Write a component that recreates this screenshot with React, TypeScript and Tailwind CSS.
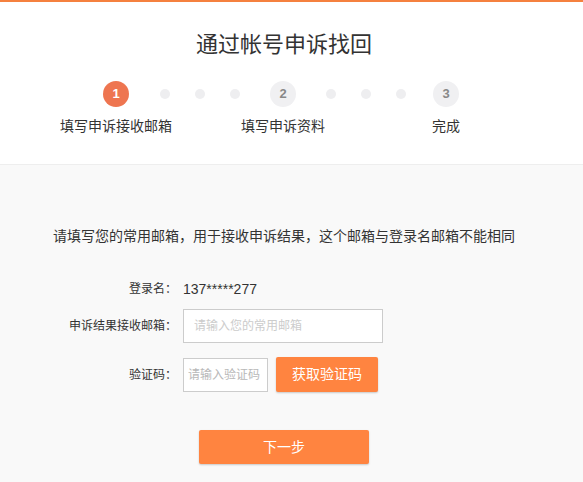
import React from "react";

const font = { fontFamily: '"Liberation Sans", "Noto Sans CJK SC", sans-serif' };

function Step({ n, label, active }: { n: number; label: string; active?: boolean }) {
  return (
    <div className="flex w-[26px] flex-col items-center">
      <div
        className={`flex h-[26px] w-[26px] items-center justify-center rounded-full text-[13px] font-bold ${
          active ? "bg-[#ee7550] text-white" : "bg-[#f0f0f2] text-[#888]"
        }`}
      >
        {n}
      </div>
      <div className="mt-[9px] whitespace-nowrap text-[14px] leading-[20px] text-[#333]">{label}</div>
    </div>
  );
}

function Dots({ className }: { className: string }) {
  return (
    <div className={`flex h-[26px] items-center gap-[25px] ${className}`}>
      <span className="h-[10px] w-[10px] rounded-full bg-[#eeeef0]" />
      <span className="h-[10px] w-[10px] rounded-full bg-[#eeeef0]" />
      <span className="h-[10px] w-[10px] rounded-full bg-[#eeeef0]" />
    </div>
  );
}

export default function App() {
  return (
    <div className="min-h-[482px] w-full bg-[#f9f9f9]" style={font}>
      {/* header */}
      <div className="border-t-2 border-b border-t-[#f5813f] border-b-[#eeeeee] bg-white pt-[28px] pb-[28px]">
        <h1 className="w-[568px] text-center text-[22px] leading-[30px] font-normal text-[#333]">
          通过帐号申诉找回
        </h1>
        <div className="mt-[21px] flex items-start pl-[103px]">
          <Step n={1} label="填写申诉接收邮箱" active />
          <Dots className="ml-[31px] mr-[30px]" />
          <Step n={2} label="填写申诉资料" />
          <Dots className="ml-[30px] mr-[27px]" />
          <Step n={3} label="完成" />
        </div>
      </div>

      {/* form */}
      <div className="pt-[61px] pb-[18px]">
        <p className="pl-[53px] text-[14px] leading-[20px] text-[#333]">
          请填写您的常用邮箱，用于接收申诉结果，这个邮箱与登录名邮箱不能相同
        </p>

        <div className="mt-[33px] grid grid-cols-[177px_auto] items-center gap-x-[6px]">
          <span className="text-right text-[12px] leading-[20px] text-[#333]">登录名：</span>
          <span className="text-[14px] leading-[20px] text-[#333]">137*****277</span>

          <span className="mt-[10px] text-right text-[12px] text-[#333]">申诉结果接收邮箱：</span>
          <input
            className="mt-[10px] h-[34px] w-[200px] border border-[#cccccc] bg-white pl-[10px] text-[12px] outline-none placeholder:text-[#cccccc]"
            placeholder="请输入您的常用邮箱"
          />

          <span className="mt-[14px] text-right text-[12px] text-[#333]">验证码：</span>
          <div className="mt-[14px] flex items-center gap-[8px]">
            <input
              className="h-[34px] w-[85px] border border-[#cccccc] bg-white pl-[4px] text-[12px] outline-none placeholder:text-[#b8b8b8]"
              placeholder="请输入验证码"
            />
            <button className="h-[35px] w-[102px] rounded-[2px] bg-[#ff8440] text-[14px] text-white shadow-[0_1px_2px_rgba(0,0,0,0.2)]">
              获取验证码
            </button>
          </div>
        </div>

        <button className="mt-[38px] ml-[199px] h-[34px] w-[170px] rounded-[2px] bg-[#ff8440] text-[14px] text-white shadow-[0_1px_2px_rgba(0,0,0,0.2)]">
          下一步
        </button>
      </div>
    </div>
  );
}
